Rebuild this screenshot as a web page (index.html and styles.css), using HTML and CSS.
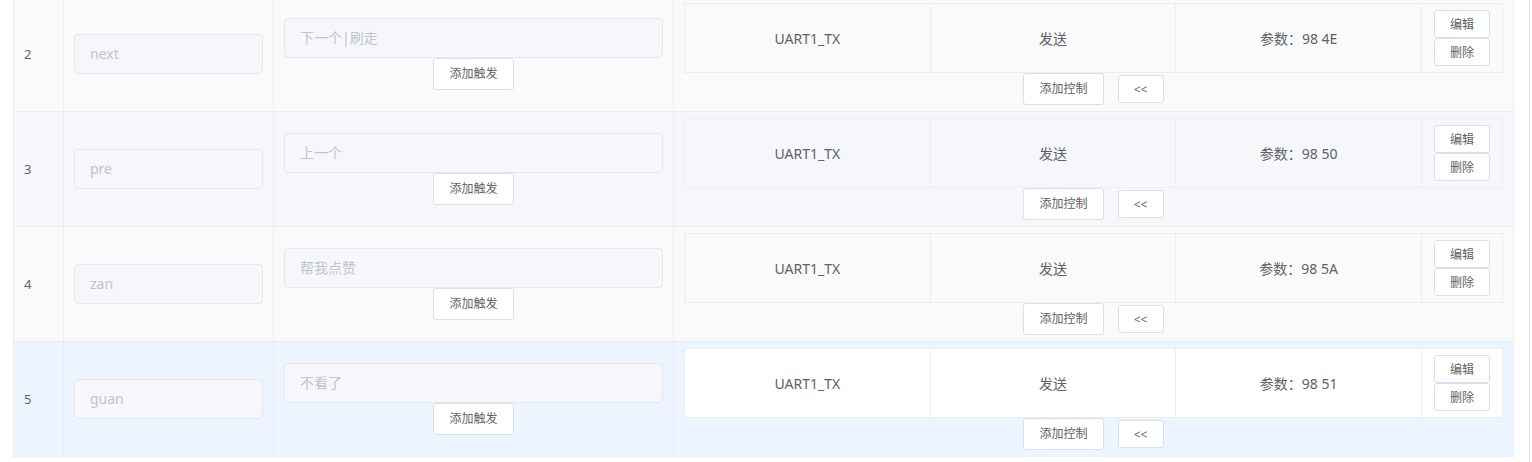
FILE: index.html
```html
<!DOCTYPE html>
<html lang="zh-CN">
<head>
<meta charset="utf-8">
<title>触发控制列表</title>
<link rel="stylesheet" href="styles.css">
</head>
<body>
<div class="page">
  <div class="table">
    <div class="row striped">
      <div class="cell idx">2</div>
      <div class="cell"><div class="inp">next</div></div>
      <div class="cell center"><div class="inp">下一个|刷走</div><div class="btn">添加触发</div></div>
      <div class="cell">
        <div class="itable">
          <div class="icell">UART1_TX</div>
          <div class="icell">发送</div>
          <div class="icell">参数：98 4E</div>
          <div class="icell ops"><div class="mbtn">编辑</div><div class="mbtn">删除</div></div>
        </div>
        <div class="actions"><div class="btn">添加控制</div><div class="mbtn small">&lt;&lt;</div></div>
      </div>
    </div>
    <div class="row plain">
      <div class="cell idx">3</div>
      <div class="cell"><div class="inp">pre</div></div>
      <div class="cell center"><div class="inp">上一个</div><div class="btn">添加触发</div></div>
      <div class="cell">
        <div class="itable">
          <div class="icell">UART1_TX</div>
          <div class="icell">发送</div>
          <div class="icell">参数：98 50</div>
          <div class="icell ops"><div class="mbtn">编辑</div><div class="mbtn">删除</div></div>
        </div>
        <div class="actions"><div class="btn">添加控制</div><div class="mbtn small">&lt;&lt;</div></div>
      </div>
    </div>
    <div class="row striped">
      <div class="cell idx">4</div>
      <div class="cell"><div class="inp">zan</div></div>
      <div class="cell center"><div class="inp">帮我点赞</div><div class="btn">添加触发</div></div>
      <div class="cell">
        <div class="itable">
          <div class="icell">UART1_TX</div>
          <div class="icell">发送</div>
          <div class="icell">参数：98 5A</div>
          <div class="icell ops"><div class="mbtn">编辑</div><div class="mbtn">删除</div></div>
        </div>
        <div class="actions"><div class="btn">添加控制</div><div class="mbtn small">&lt;&lt;</div></div>
      </div>
    </div>
    <div class="row hover">
      <div class="cell idx">5</div>
      <div class="cell"><div class="inp">guan</div></div>
      <div class="cell center"><div class="inp">不看了</div><div class="btn">添加触发</div></div>
      <div class="cell">
        <div class="itable">
          <div class="icell">UART1_TX</div>
          <div class="icell">发送</div>
          <div class="icell">参数：98 51</div>
          <div class="icell ops"><div class="mbtn">编辑</div><div class="mbtn">删除</div></div>
        </div>
        <div class="actions"><div class="btn">添加控制</div><div class="mbtn small">&lt;&lt;</div></div>
      </div>
    </div>
  </div>
  <div class="gutter"></div>
  <div class="edge"></div>
</div>
</body>
</html>
```

FILE: styles.css
```css
* { box-sizing: border-box; }
html, body { margin: 0; padding: 0; background: #fff; }
body {
  font-family: "Noto Sans", "Noto Sans CJK SC", sans-serif;
  color: #606266;
  overflow: hidden;
  height: 462px;
}
.page { display: flex; height: 462px; align-items: stretch; }
.table {
  margin-left: 13px;
  margin-top: -3px;
  width: 1501px;
  border-left: 1px solid #ebeef5;
  align-self: flex-start;
}
.row {
  display: grid;
  grid-template-columns: 50px 210px 400px 840px;
  height: 115px;
}
.cell {
  border-right: 1px solid #ebeef5;
  border-bottom: 1px solid #ebeef5;
  display: flex;
  flex-direction: column;
  justify-content: center;
  padding: 0 10px;
}
.cell.center { align-items: center; }
.idx { font-size: 13px; line-height: 20px; }
.row.striped .cell, .row.striped .icell { background: #fafafa; }
.row.plain .cell, .row.plain .icell { background: #f5f7fa; }
.row.hover .cell { background: #ecf5ff; }
.row.hover .icell { background: #fff; }

.inp {
  width: 100%;
  height: 40px;
  line-height: 38px;
  padding: 0 15px;
  border: 1px solid #e4e7ed;
  border-radius: 4px;
  background: #f5f7fa;
  color: #c0c4cc;
  font-size: 14px;
}
.btn {
  height: 32px;
  padding: 0 15px;
  border: 1px solid #dcdfe6;
  border-radius: 3px;
  background: #fff;
  font-size: 12px;
  line-height: 30px;
  color: #606266;
  white-space: nowrap;
}
.itable {
  border: 1px solid #ebeef5;
  display: grid;
  grid-template-columns: 1fr 1fr 1fr 80px;
}
.icell {
  height: 68px;
  display: flex;
  align-items: center;
  justify-content: center;
  border-right: 1px solid #ebeef5;
  font-size: 14px;
}
.icell.ops { border-right: 0; flex-direction: column; }
.mbtn {
  width: 56px;
  height: 28px;
  border: 1px solid #dcdfe6;
  border-radius: 3px;
  background: #fff;
  font-size: 12px;
  display: flex;
  align-items: center;
  justify-content: center;
  color: #606266;
}
.mbtn.small { width: 46px; }
.actions {
  display: flex;
  justify-content: center;
  align-items: center;
  gap: 14px;
}
.gutter { width: 15px; }
.edge { width: 1px; background: #e6e6e6; }
```
